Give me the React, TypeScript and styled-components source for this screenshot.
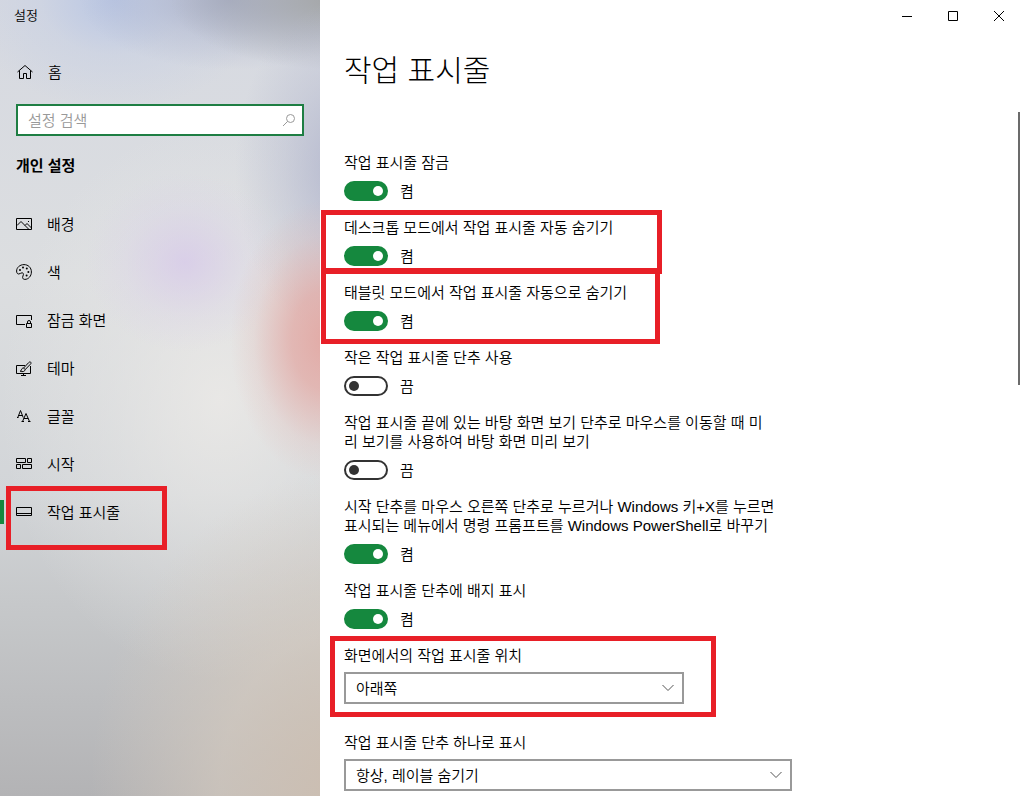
import React, { useState } from "react";
import styled, { createGlobalStyle, css } from "styled-components";

const accent = "#15883e";
const marker = "#e81f27";

const GlobalStyle = createGlobalStyle`
  * { box-sizing: border-box; }
  body {
    margin: 0;
    overflow: hidden;
    background: #fff;
    color: #000;
    font: 350 15px/19px "Liberation Sans", "Noto Sans CJK KR", sans-serif;
  }
  button, input, select { font: inherit; color: inherit; }
`;

const Window = styled.div`
  display: flex;
  height: 100vh;
`;

const Sidebar = styled.aside`
  flex: 0 0 320px;
  background:
    radial-gradient(ellipse 95px 140px at 325px 340px, rgba(226, 165, 160, 0.9), rgba(226, 165, 160, 0.7) 35%, rgba(226, 175, 170, 0.2) 75%, transparent),
    radial-gradient(ellipse 100px 90px at 185px 262px, rgba(215, 202, 233, 0.8), rgba(215, 205, 233, 0.25) 60%, transparent),
    radial-gradient(ellipse 110px 170px at 345px 170px, rgba(176, 180, 204, 0.9), rgba(180, 184, 206, 0.4) 55%, transparent),
    radial-gradient(ellipse 170px 70px at 340px 0, rgba(160, 162, 162, 0.95), rgba(165, 168, 175, 0.6) 50%, transparent),
    radial-gradient(ellipse 150px 70px at 230px 0, rgba(165, 172, 198, 0.9), rgba(175, 182, 205, 0.4) 55%, transparent),
    radial-gradient(ellipse 150px 110px at 115px 0, rgba(182, 196, 228, 0.9), rgba(195, 205, 228, 0.4) 50%, transparent),
    radial-gradient(ellipse 260px 320px at 350px 790px, rgba(205, 190, 176, 0.95), rgba(215, 203, 190, 0.6) 50%, transparent),
    radial-gradient(ellipse 220px 280px at 220px 400px, rgba(237, 235, 232, 0.8), rgba(234, 233, 231, 0.4) 50%, transparent),
    linear-gradient(#d6d9e1, #dcdee0 35%, #d2d5d8 62%, #c6c8ca 76%, #b3b3b5);
`;

const TitleBar = styled.header`
  height: 32px;
  padding: 0 14px;
  font-size: 13px;
  line-height: 32px;
`;

const itemRow = css`
  display: flex;
  align-items: center;
  gap: 15px;
  height: 48px;
  padding-left: 16px;
  color: #000;
  text-decoration: none;
`;

const HomeLink = styled.a`
  ${itemRow}
  margin: 16px 0 8px;
`;

const SearchBox = styled.label`
  display: flex;
  align-items: center;
  height: 32px;
  margin: 0 16px;
  padding: 0 6px 0 10px;
  border: 2px solid #1e7e43;
  background: #fff;
  color: #999;
`;

const SearchInput = styled.input`
  flex: 1;
  min-width: 0;
  padding: 0;
  border: 0;
  outline: 0;
  background: none;
  &::placeholder { color: #999; opacity: 1; }
`;

const SectionTitle = styled.h2`
  margin: 0 16px 4px;
  font-size: 15px;
  line-height: 60px;
  font-weight: 700;
`;

const NavList = styled.ul`
  margin: 0;
  padding: 0;
  list-style: none;
`;

const NavItem = styled.li<{ $active?: boolean }>`
  position: relative;
  ${(p) => p.$active && css`
    &::before {
      content: "";
      position: absolute;
      left: 0;
      top: 12px;
      width: 4px;
      height: 24px;
      background: ${accent};
    }
  `}
`;

const NavLink = styled.a`${itemRow}`;

const Highlight = styled.span<{ $x: number; $y: number; $w: number; $h: number }>`
  position: absolute;
  left: ${(p) => p.$x}px;
  top: ${(p) => p.$y}px;
  width: ${(p) => p.$w}px;
  height: ${(p) => p.$h}px;
  border: 5px solid ${marker};
  pointer-events: none;
`;

const Main = styled.main`
  position: relative;
  flex: 1;
  min-width: 0;
  overflow: hidden;
`;

const WindowControls = styled.div`
  display: flex;
  justify-content: flex-end;
  gap: 4px;
  height: 32px;
`;

const WindowButton = styled.button`
  display: grid;
  place-items: center;
  width: 42px;
  padding: 0;
  border: 0;
  background: none;
`;

const Content = styled.div`
  padding: 19px 24px 0;
`;

const PageTitle = styled.h1`
  margin: 0 0 62px;
  font-size: 30px;
  line-height: 40px;
  font-weight: 300;
`;

const Setting = styled.div<{ $select?: boolean }>`
  position: relative;
  display: flex;
  flex-direction: column;
  align-items: flex-start;
  gap: ${(p) => (p.$select ? 7 : 9)}px;
  margin-bottom: ${(p) => (p.$select ? 29 : 17)}px;
`;

const SettingLabel = styled.label`
  white-space: pre-line;
`;

const SwitchRow = styled.div`
  display: flex;
  align-items: center;
  gap: 12px;
  height: 20px;
`;

const Switch = styled.input`
  appearance: none;
  display: flex;
  align-items: center;
  width: 44px;
  height: 20px;
  margin: 0;
  padding: 0 3px;
  border: 2px solid #333;
  border-radius: 10px;
  background: #fff;
  &::before {
    content: "";
    width: 10px;
    height: 10px;
    border-radius: 5px;
    background: #333;
  }
  &:checked {
    justify-content: flex-end;
    border-color: ${accent};
    background: ${accent};
  }
  &:checked::before { background: #fff; }
`;

const SelectBox = styled.div<{ $wide?: boolean }>`
  position: relative;
  width: ${(p) => (p.$wide ? 448 : 340)}px;
  max-width: 100%;
`;

const Select = styled.select`
  appearance: none;
  display: block;
  width: 100%;
  height: 32px;
  padding: 0 32px 0 10px;
  border: 2px solid #999;
  border-radius: 0;
  background: #fff;
`;

const Chevron = styled.svg`
  position: absolute;
  right: 10px;
  top: 12px;
  pointer-events: none;
`;

const ScrollThumb = styled.div`
  position: absolute;
  right: 0;
  top: 112px;
  width: 2px;
  height: 273px;
  background: #6b6b6b;
`;

const Icon = ({ children }: { children: React.ReactNode }) => (
  <svg width="16" height="16" viewBox="0 0 16 16" fill="none" stroke="#000" aria-hidden="true">
    {children}
  </svg>
);

const icons = {
  picture: (
    <Icon>
      <path d="M.5 2.500h15v11H.5z" />
      <path d="M1 9.500l4-4 7.500 7.500M9 9.500l2-2 4.500 4.500" />
      <path d="M12 5.500h1" />
    </Icon>
  ),
  palette: (
    <Icon>
      <path d="M8 .6C3.800.6.6 3.600.6 7c0 2 .9 3 2.100 3 1.500 0 2-1.200 3.300-1.200 1.100 0 1.600.8 1.400 1.900-.2 1.200-.8 1.500-.8 2.700 0 1.300 1 2 2.200 2 3.700 0 6.600-3.400 6.600-7.400C15.400 3.600 12.200.6 8 .6z" />
      <g fill="#000" stroke="none">
        <circle cx="4" cy="6" r="1" />
        <circle cx="7" cy="3.600" r="1" />
        <circle cx="10.800" cy="4.600" r="1" />
        <circle cx="12.400" cy="8" r="1" />
        <circle cx="10.600" cy="11.400" r="1" />
      </g>
    </Icon>
  ),
  lock: (
    <Icon>
      <path d="M9 12.500H.5v-9h15V8" />
      <path d="M10.500 11.500h5v4h-5zM11.500 11.500V10a1.500 1.500 0 0 1 3 0v1.500" />
    </Icon>
  ),
  theme: (
    <Icon>
      <path d="M9 5.500H.5v8h14V6M5 15.500h5M7.500 13.500v2" />
      <path d="M14.700 2.200c-.6-.6-1.400-.2-2 .4L7.600 8l1.600 1.600 5.200-5.400c.6-.6.9-1.400.3-2zM7.600 8c-1.400 0-2 .8-2.200 2-.1.700-.6 1-1.200 1.200 2 1 4.800.4 5-1.600" />
    </Icon>
  ),
  start: (
    <Icon>
      <path d="M.5 2.500h9v4h-9zM11.500 2.500h4v4h-4zM.5 8.500h4v4h-4zM6.500 8.500h9v4h-9z" />
    </Icon>
  ),
  font: (
    <Icon>
      <path d="M1.800 9.500L4.500 2.500l2.700 7M2.700 7.500h3.600M6.500 13.500L10 5.500l3.500 8M7.700 10.500h4.600" />
      <path d="M1 9.500h1.500M5.500 13.500H8M12 13.500h2.500" />
    </Icon>
  ),
  taskbar: (
    <Icon>
      <path d="M.5 3.500h15v8H.5zM.5 9.500h15" />
    </Icon>
  ),
};

const navItems = [
  { label: "배경", icon: icons.picture },
  { label: "색", icon: icons.palette },
  { label: "잠금 화면", icon: icons.lock },
  { label: "테마", icon: icons.theme },
  { label: "글꼴", icon: icons.font },
  { label: "시작", icon: icons.start },
  { label: "작업 표시줄", icon: icons.taskbar, active: true },
];

type Box = { x: number; y: number; w: number; h: number };

const switches: { id: string; label: string; on: boolean; box?: Box }[] = [
  { id: "lock", label: "작업 표시줄 잠금", on: true },
  { id: "hide-desktop", label: "데스크톱 모드에서 작업 표시줄 자동 숨기기", on: true, box: { x: -23, y: -8, w: 341, h: 64 } },
  { id: "hide-tablet", label: "태블릿 모드에서 작업 표시줄 자동으로 숨기기", on: true, box: { x: -23, y: -15, w: 339, h: 76 } },
  { id: "small", label: "작은 작업 표시줄 단추 사용", on: false },
  { id: "peek", label: "작업 표시줄 끝에 있는 바탕 화면 보기 단추로 마우스를 이동할 때 미\n리 보기를 사용하여 바탕 화면 미리 보기", on: false },
  { id: "powershell", label: "시작 단추를 마우스 오른쪽 단추로 누르거나 Windows 키+X를 누르면\n표시되는 메뉴에서 명령 프롬프트를 Windows PowerShell로 바꾸기", on: true },
  { id: "badge", label: "작업 표시줄 단추에 배지 표시", on: true },
];

const Mark = ({ box }: { box: Box }) => <Highlight $x={box.x} $y={box.y} $w={box.w} $h={box.h} />;

function SwitchSetting({ id, label, on, box }: (typeof switches)[number]) {
  const [checked, setChecked] = useState(on);
  return (
    <Setting>
      <SettingLabel htmlFor={id}>{label}</SettingLabel>
      <SwitchRow>
        <Switch id={id} type="checkbox" role="switch" checked={checked} onChange={() => setChecked(!checked)} />
        <span>{checked ? "켬" : "끔"}</span>
      </SwitchRow>
      {box && <Mark box={box} />}
    </Setting>
  );
}

function SelectSetting({ id, label, options, wide, box }: { id: string; label: string; options: string[]; wide?: boolean; box?: Box }) {
  return (
    <Setting $select>
      <SettingLabel htmlFor={id}>{label}</SettingLabel>
      <SelectBox $wide={wide}>
        <Select id={id}>
          {options.map((o) => <option key={o}>{o}</option>)}
        </Select>
        <Chevron width="12" height="8" viewBox="0 0 12 8" fill="none" stroke="#555" aria-hidden="true">
          <path d="M.5 1l5.500 5.500L11.500 1" />
        </Chevron>
      </SelectBox>
      {box && <Mark box={box} />}
    </Setting>
  );
}

export default function App() {
  return (
    <>
      <GlobalStyle />
      <Window>
        <Sidebar>
          <TitleBar>설정</TitleBar>
          <HomeLink href="#home">
            <svg width="17" height="16" viewBox="0 0 17 16" fill="none" stroke="#000" aria-hidden="true">
              <path d="M1.500 8L9 1.500 16.500 8M3.500 6.500v8h4v-5h3v5h4v-8" />
            </svg>
            <span>홈</span>
          </HomeLink>
          <SearchBox>
            <SearchInput type="text" placeholder="설정 검색" aria-label="설정 검색" />
            <svg width="14" height="14" viewBox="0 0 14 14" fill="none" stroke="#999" aria-hidden="true">
              <circle cx="8.500" cy="5.500" r="4" />
              <path d="M5.700 8.300L1 13" />
            </svg>
          </SearchBox>
          <SectionTitle>개인 설정</SectionTitle>
          <nav>
            <NavList>
              {navItems.map((item) => (
                <NavItem key={item.label} $active={item.active}>
                  <NavLink href="#" aria-current={item.active ? "page" : undefined}>
                    {item.icon}
                    <span>{item.label}</span>
                  </NavLink>
                  {item.active && <Mark box={{ x: 6, y: -2, w: 161, h: 64 }} />}
                </NavItem>
              ))}
            </NavList>
          </nav>
        </Sidebar>
        <Main>
          <WindowControls>
            <WindowButton aria-label="최소화">
              <svg width="10" height="10" viewBox="0 0 10 10" stroke="#000"><path d="M0 5.500h10" /></svg>
            </WindowButton>
            <WindowButton aria-label="최대화">
              <svg width="10" height="10" viewBox="0 0 10 10" fill="none" stroke="#000"><path d="M.5.5h9v9h-9z" /></svg>
            </WindowButton>
            <WindowButton aria-label="닫기">
              <svg width="10" height="10" viewBox="0 0 10 10" stroke="#000"><path d="M0 0l10 10M10 0L0 10" /></svg>
            </WindowButton>
          </WindowControls>
          <Content>
            <PageTitle>작업 표시줄</PageTitle>
            {switches.map((s) => <SwitchSetting key={s.id} {...s} />)}
            <SelectSetting
              id="position"
              label="화면에서의 작업 표시줄 위치"
              options={["아래쪽", "위쪽", "왼쪽", "오른쪽"]}
              box={{ x: -14, y: -10, w: 386, h: 81 }}
            />
            <SelectSetting
              id="combine"
              label="작업 표시줄 단추 하나로 표시"
              options={["항상, 레이블 숨기기", "작업 표시줄이 꽉 찼을 때", "안 함"]}
              wide
            />
          </Content>
          <ScrollThumb />
        </Main>
      </Window>
    </>
  );
}
